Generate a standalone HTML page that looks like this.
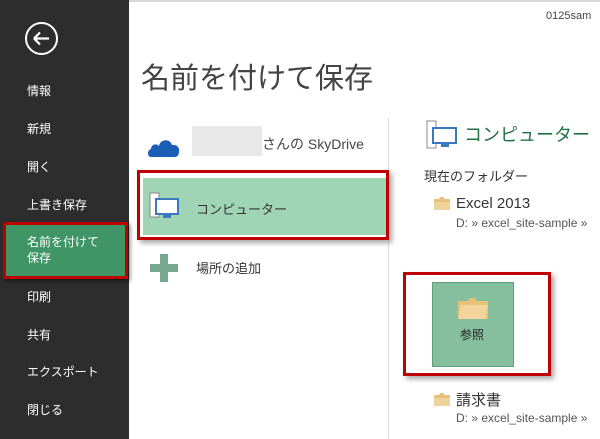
<!DOCTYPE html>
<html><head><meta charset="utf-8"><style>
body{margin:0;width:600px;height:439px;overflow:hidden;background:#fff;font-family:"Liberation Sans","Noto Sans CJK JP",sans-serif;position:relative;color:#444}
.a{position:absolute;white-space:nowrap}
#side{position:absolute;left:0;top:0;width:129px;height:439px;background:#2d2d2d}
.si{position:absolute;left:27px;color:#fff;font-size:12px}
</style></head><body>
<div class="a" style="left:0;top:0;width:600px;height:2px;background:#d8d8d8"></div>
<div id="side">
<svg class="a" style="left:24px;top:21px" width="35" height="35"><circle cx="17.5" cy="17.5" r="15.5" fill="none" stroke="#fff" stroke-width="2"/><path d="M10 17.5H25M10 17.5L16 11.5M10 17.5L16 23.5" stroke="#fff" stroke-width="2.2" fill="none"/></svg>
<div class="si" style="top:82px">情報</div>
<div class="si" style="top:120px">新規</div>
<div class="si" style="top:158px">開く</div>
<div class="si" style="top:196px">上書き保存</div>
<div class="a" style="left:3px;top:222px;width:119px;height:51px;border:3px solid #c00000;background:#3f9565;box-shadow:2px 2px 4px rgba(0,0,0,.5)"></div>
<div class="si" style="top:234px;line-height:16px">名前を付けて<br>保存</div>
<div class="si" style="top:288px">印刷</div>
<div class="si" style="top:326px">共有</div>
<div class="si" style="top:363px">エクスポート</div>
<div class="si" style="top:401px">閉じる</div>
</div>
<div class="a" style="left:546px;top:10px;font-size:11px;color:#444">0125sam</div>
<div class="a" style="left:141px;top:55px;font-size:29px;color:#444">名前を付けて保存</div>
<div class="a" style="left:388px;top:118px;width:1px;height:321px;background:#e0e0e0"></div>
<svg class="a" style="left:147px;top:134px" width="34" height="24"><path d="M4 23C0 23 0 16 4 15C4 10 10 9 12 12C13 5 23 4 25 11C30 10 33 14 32 18C32 21 30 23 28 23Z" fill="#1b5eb5"/></svg>
<div class="a" style="left:192px;top:126px;width:70px;height:30px;background:#e8e8e8"></div>
<div class="a" style="left:262px;top:134px;font-size:14px">さんの SkyDrive</div>
<div class="a" style="left:137px;top:170px;width:246px;height:64px;border:3px solid #c00000;box-shadow:3px 3px 5px rgba(0,0,0,.35)"></div>
<div class="a" style="left:143px;top:178px;width:243px;height:57px;background:#9fd4b5"></div>
<svg class="a" style="left:149px;top:192px" width="32" height="28"><rect x="1" y="1" width="9" height="24" fill="#fff" stroke="#888"/><rect x="7" y="7" width="22" height="15" fill="#fff" stroke="#3c78c0" stroke-width="2"/><rect x="14" y="23" width="8" height="3" fill="#3c78c0"/></svg>
<div class="a" style="left:196px;top:199px;font-size:13px;color:#333">コンピューター</div>
<svg class="a" style="left:150px;top:254px" width="28" height="28"><path d="M10 0H18V10H28V18H18V28H10V18H0V10H10Z" fill="#76a890"/></svg>
<div class="a" style="left:196px;top:258px;font-size:13px;color:#333">場所の追加</div>
<svg class="a" style="left:426px;top:120px" width="34" height="30"><rect x="1" y="1" width="9" height="27" fill="#fff" stroke="#888"/><rect x="7" y="8" width="23" height="15" fill="#fff" stroke="#3c78c0" stroke-width="2"/><rect x="15" y="24" width="8" height="3" fill="#3c78c0"/></svg>
<div class="a" style="left:464px;top:121px;font-size:18px;color:#217346">コンピューター</div>
<div class="a" style="left:424px;top:166px;font-size:13px;color:#333">現在のフォルダー</div>
<svg class="a" style="left:434px;top:197px" width="16" height="13"><path d="M0 2H5L6 0H10V2H16V13H0Z" fill="#e8c07a"/><path d="M0 5H16V13H0Z" fill="#f0d39c"/></svg>
<div class="a" style="left:456px;top:195px;font-size:15px;color:#333">Excel 2013</div>
<div class="a" style="left:456px;top:216px;font-size:12px;color:#555">D: » excel_site-sample »</div>
<div class="a" style="left:403px;top:272px;width:142px;height:98px;border:3px solid #c00000;box-shadow:3px 3px 5px rgba(0,0,0,.35)"></div>
<div class="a" style="left:432px;top:282px;width:80px;height:83px;background:#86bf9d;border:1px solid #5e9f7a"></div>
<svg class="a" style="left:458px;top:298px" width="30" height="21"><path d="M0 3H10L12 0H18V3H30V21H0Z" fill="#e8c07a"/><path d="M3 7H30L27 21H0Z" fill="#f2d49c"/></svg>
<div class="a" style="left:460px;top:326px;font-size:12px;color:#222">参照</div>
<svg class="a" style="left:434px;top:393px" width="16" height="13"><path d="M0 2H5L6 0H10V2H16V13H0Z" fill="#e8c07a"/><path d="M0 5H16V13H0Z" fill="#f0d39c"/></svg>
<div class="a" style="left:456px;top:389px;font-size:15px;color:#333">請求書</div>
<div class="a" style="left:456px;top:411px;font-size:12px;color:#555">D: » excel_site-sample »</div>
</body></html>
